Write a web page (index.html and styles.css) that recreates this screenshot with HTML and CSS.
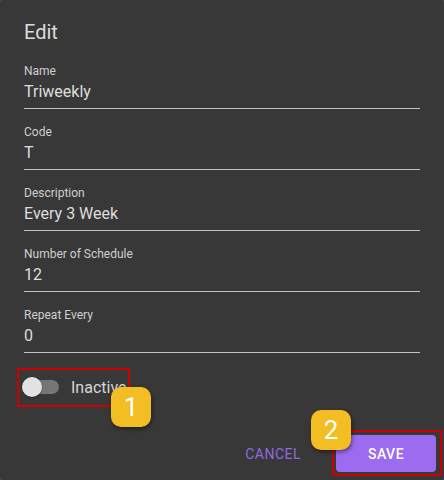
FILE: index.html
```html
<!DOCTYPE html>
<html>
<head>
<meta charset="utf-8">
<link rel="stylesheet" href="styles.css">
</head>
<body>
<div class="dialog">
  <div class="content">
    <h2 class="title">Edit</h2>
    <div class="field">
      <div class="label">Name</div>
      <div class="value">Triweekly</div>
    </div>
    <div class="field">
      <div class="label">Code</div>
      <div class="value">T</div>
    </div>
    <div class="field">
      <div class="label">Description</div>
      <div class="value">Every 3 Week</div>
    </div>
    <div class="field">
      <div class="label">Number of Schedule</div>
      <div class="value">12</div>
    </div>
    <div class="field">
      <div class="label">Repeat Every</div>
      <div class="value">0</div>
    </div>
    <div class="toggle-row">
      <span class="switch"><span class="track"></span><span class="thumb"></span></span>
      <span class="toggle-label">Inactive</span>
    </div>
  </div>
  <div class="actions">
    <button class="btn btn-text">Cancel</button>
    <button class="btn btn-primary">Save</button>
  </div>
  <div class="highlight hl-toggle"></div>
  <div class="highlight hl-save"></div>
  <div class="badge badge-1">1</div>
  <div class="badge badge-2">2</div>
</div>
</body>
</html>
```

FILE: styles.css
```css
html, body {
  margin: 0;
  padding: 0;
  background: #4a4a4a;
}
body {
  font-family: Roboto, "Liberation Sans", Arial, sans-serif;
}
.dialog {
  position: relative;
  width: 444px;
  height: 480px;
  box-sizing: border-box;
  background: #383838;
  border-radius: 4px;
  display: flex;
  flex-direction: column;
  overflow: hidden;
}
.content {
  padding: 16px 24px 0;
  display: flex;
  flex-direction: column;
}
.title {
  margin: 0 0 15px;
  font-size: 20px;
  font-weight: 400;
  line-height: 32px;
  color: #dcdcdc;
}
.field {
  margin-bottom: 15px;
  border-bottom: 1px solid #c4c4c4;
  padding-bottom: 4px;
}
.label {
  font-size: 12px;
  line-height: 16px;
  color: #cfcfcf;
}
.value {
  font-size: 16px;
  line-height: 24px;
  margin-top: 1px;
  color: #dedede;
}
.toggle-row {
  display: flex;
  align-items: center;
  height: 38px;
  margin-top: 0;
}
.switch {
  position: relative;
  width: 38px;
  height: 20px;
  margin-left: -2px;
  flex: none;
}
.track {
  position: absolute;
  left: 8px;
  top: 3px;
  width: 29px;
  height: 14px;
  border-radius: 7px;
  background: #767676;
}
.thumb {
  position: absolute;
  left: 0;
  top: 0;
  width: 20px;
  height: 20px;
  border-radius: 50%;
  background: #e2e2e2;
  box-shadow: 0 1px 2px rgba(0,0,0,0.35);
}
.toggle-label {
  margin-left: 11px;
  font-size: 16px;
  color: #d6d6d6;
}
.actions {
  margin-top: auto;
  display: flex;
  justify-content: flex-end;
  align-items: center;
  gap: 35px;
  padding: 0 8px 8px;
}
.btn {
  font-family: inherit;
  font-size: 14px;
  text-transform: uppercase;
  letter-spacing: 0.5px;
  border: none;
  border-radius: 4px;
  height: 37px;
  cursor: pointer;
}
.btn-text {
  background: transparent;
  color: #9268df;
  font-weight: 400;
  padding: 0;
}
.btn-primary {
  width: 100px;
  font-weight: 500;
  background: #9d6bef;
  color: #ffffff;
}
.highlight {
  position: absolute;
  border: 2px solid #cc0000;
  box-sizing: border-box;
}
.hl-toggle {
  left: 17px;
  top: 368px;
  width: 113px;
  height: 39px;
}
.hl-save {
  left: 332px;
  top: 430px;
  width: 110px;
  height: 46px;
}
.badge {
  position: absolute;
  width: 40px;
  height: 40px;
  border-radius: 10px;
  background: #f3bd24;
  color: #ffffff;
  font-size: 26px;
  line-height: 40px;
  text-align: center;
  box-shadow: 1px 2px 4px rgba(0,0,0,0.45);
}
.badge-1 {
  left: 111px;
  top: 387px;
}
.badge-2 {
  left: 311px;
  top: 410px;
}
```
